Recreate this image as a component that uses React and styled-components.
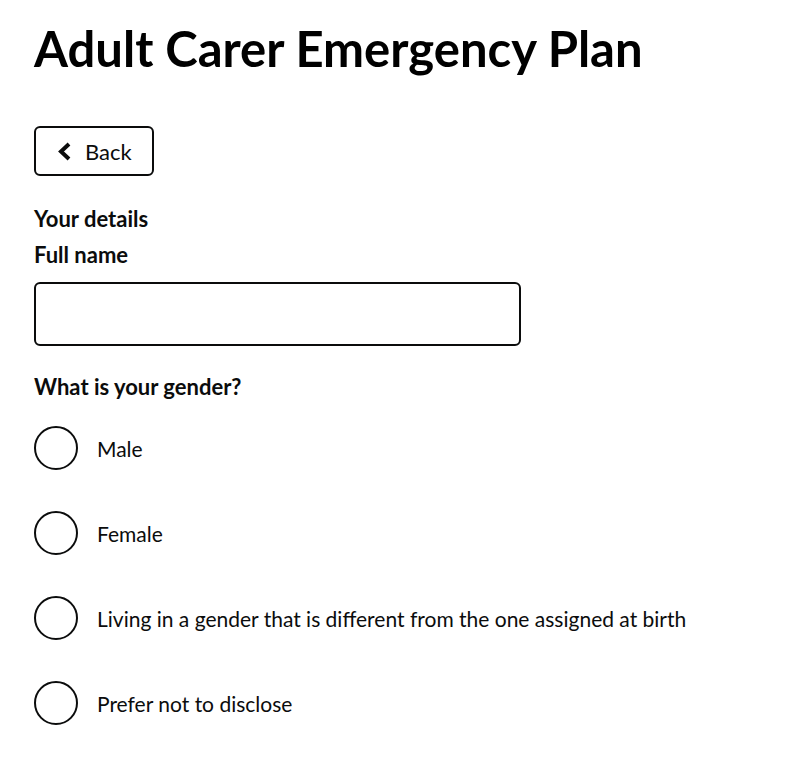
import React from "react";
import styled, { createGlobalStyle } from "styled-components";

const GlobalStyle = createGlobalStyle`
  body {
    margin: 0;
    background: #fff;
    color: #0b0c0c;
    font-family: Lato, "Noto Sans", sans-serif;
  }
`;

const Page = styled.main`
  padding: 20px 34px 30px;
`;

const Title = styled.h1`
  margin: 0;
  font-size: 49px;
  line-height: 56px;
  font-weight: 700;
  color: #000;
`;

const BackButton = styled.button`
  margin-top: 50px;
  display: flex;
  align-items: center;
  gap: 13px;
  height: 50px;
  padding: 0 20px 0 21px;
  border: 2px solid #0b0c0c;
  border-radius: 6px;
  background: #fff;
  font-family: inherit;
  font-size: 22px;
  color: #0b0c0c;
  cursor: pointer;
`;

const Heading = styled.div`
  font-size: 22px;
  font-weight: 700;
  line-height: 36px;
  color: #0b0c0c;
`;

const FieldLabel = styled(Heading).attrs({ as: "label" })`
  display: block;
`;

const Details = styled.div`
  margin-top: 25px;
`;

const TextInput = styled.input`
  display: block;
  box-sizing: border-box;
  margin-top: 9px;
  width: 487px;
  height: 64px;
  border: 2px solid #0b0c0c;
  border-radius: 6px;
  font-family: inherit;
  font-size: 21px;
  padding: 0 14px;
`;

const Question = styled(Heading)`
  margin-top: 23px;
`;

const Options = styled.div`
  margin-top: 21px;
  display: flex;
  flex-direction: column;
  gap: 41px;
`;

const Option = styled.label`
  display: flex;
  align-items: center;
  gap: 19px;
  font-size: 21px;
  color: #0b0c0c;
  cursor: pointer;
`;

const Circle = styled.span`
  box-sizing: border-box;
  width: 44px;
  height: 44px;
  border: 2px solid #0b0c0c;
  border-radius: 50%;
  flex-shrink: 0;
`;

const Chevron = () => (
  <svg width="15" height="19" viewBox="0 0 15 19" aria-hidden="true">
    <path
      d="M12 2 L4 9.5 L12 17"
      fill="none"
      stroke="#0b0c0c"
      strokeWidth="4"
      strokeLinejoin="miter"
    />
  </svg>
);

const genders = [
  "Male",
  "Female",
  "Living in a gender that is different from the one assigned at birth",
  "Prefer not to disclose",
];

export default function App() {
  return (
    <Page>
      <GlobalStyle />
      <Title>Adult Carer Emergency Plan</Title>
      <BackButton type="button">
        <Chevron />
        Back
      </BackButton>
      <Details>
        <Heading>Your details</Heading>
        <FieldLabel htmlFor="full-name">Full name</FieldLabel>
        <TextInput id="full-name" type="text" />
      </Details>
      <Question>What is your gender?</Question>
      <Options>
        {genders.map((g) => (
          <Option key={g}>
            <Circle />
            {g}
          </Option>
        ))}
      </Options>
    </Page>
  );
}
